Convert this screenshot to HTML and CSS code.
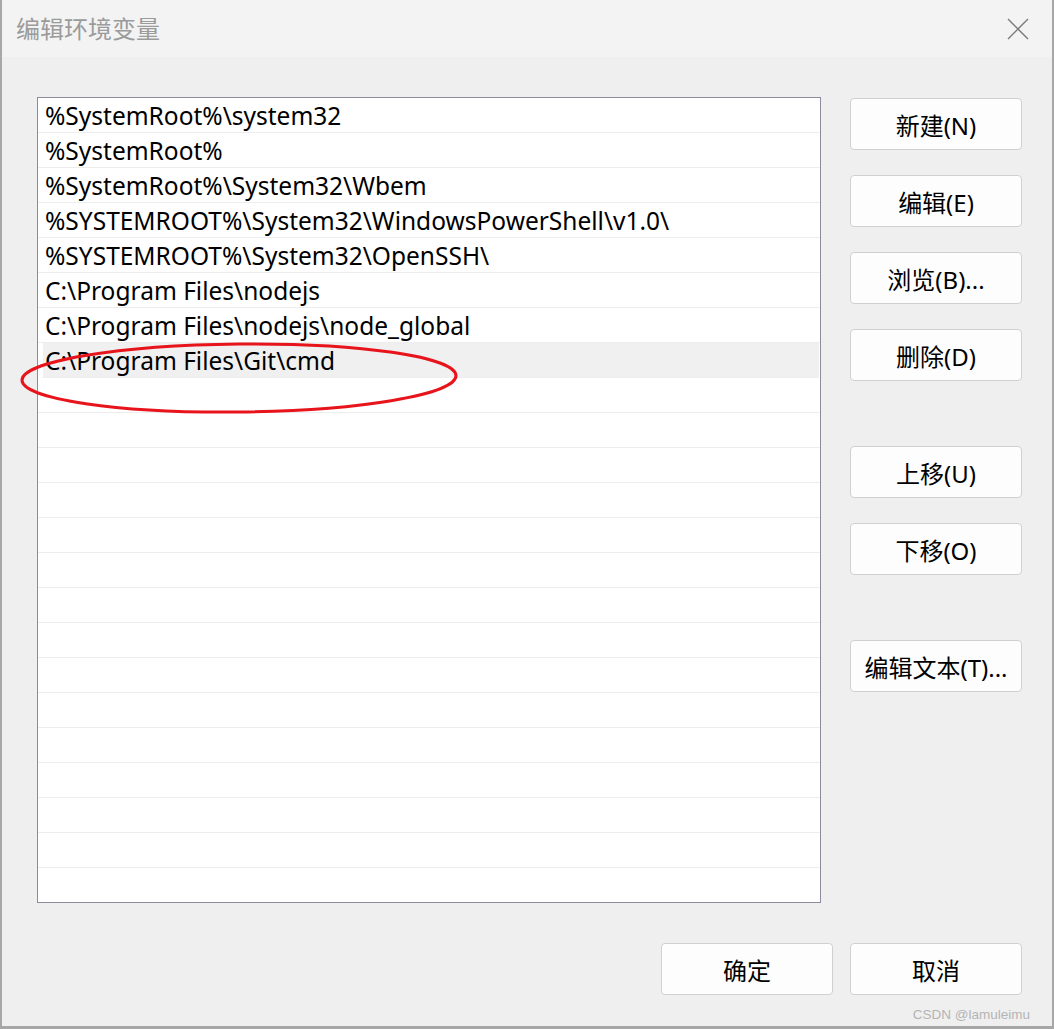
FILE: index.html
```html
<!DOCTYPE html>
<html lang="zh-CN">
<head>
    <meta charset="UTF-8">
    <meta name="viewport" content="width=device-width, initial-scale=1.0">
    <title>编辑环境变量</title>
    <link rel="stylesheet" href="styles.css">
</head>
<body>
    <div class="window">
        <div class="title-bar">
            <span class="title">编辑环境变量</span>
            <svg class="close-icon" width="22" height="22" viewBox="0 0 22 22" fill="none" stroke="#7a7a7a" stroke-width="1.4">
                <path d="M1 1 L21 21 M21 1 L1 21"></path>
            </svg>
        </div>

        <div class="content">
            <div class="path-list">
                <div class="row">%SystemRoot%\system32</div>
                <div class="row">%SystemRoot%</div>
                <div class="row">%SystemRoot%\System32\Wbem</div>
                <div class="row">%SYSTEMROOT%\System32\WindowsPowerShell\v1.0\</div>
                <div class="row">%SYSTEMROOT%\System32\OpenSSH\</div>
                <div class="row">C:\Program Files\nodejs</div>
                <div class="row">C:\Program Files\nodejs\node_global</div>
                <div class="row selected">C:\Program Files\Git\cmd</div>
                <div class="row"></div>
                <div class="row"></div>
                <div class="row"></div>
                <div class="row"></div>
                <div class="row"></div>
                <div class="row"></div>
                <div class="row"></div>
                <div class="row"></div>
                <div class="row"></div>
                <div class="row"></div>
                <div class="row"></div>
                <div class="row"></div>
                <div class="row"></div>
                <div class="row"></div>
                <div class="row last"></div>
            </div>

            <div class="side-buttons">
                <button class="btn">新建(N)</button>
                <button class="btn">编辑(E)</button>
                <button class="btn">浏览(B)...</button>
                <button class="btn">删除(D)</button>
                <button class="btn group-start">上移(U)</button>
                <button class="btn">下移(O)</button>
                <button class="btn group-start">编辑文本(T)...</button>
            </div>
        </div>

        <div class="footer">
            <button class="btn">确定</button>
            <button class="btn">取消</button>
        </div>

        <!-- red marker drawn over the screenshot -->
        <svg class="marker" width="460" height="90" viewBox="0 0 460 90">
            <ellipse cx="237" cy="45" rx="217" ry="34" fill="none" stroke="#e8141b" stroke-width="3" transform="rotate(-0.6 237 45)"></ellipse>
        </svg>

        <div class="watermark">CSDN @lamuleimu</div>
    </div>
</body>
</html>
```

FILE: styles.css
```css
/* Dialog window */
html, body {
    margin: 0;
    padding: 0;
}

body {
    background-color: #a7a7a7;
    font-family: "Noto Sans", "Noto Sans CJK SC", sans-serif;
    width: 1054px;
    height: 1029px;
    overflow: hidden;
}

.window {
    position: relative;
    margin: 0 2px 0 2px;
    height: 1026px;
    background-color: #efefef;
}

.title-bar {
    height: 57px;
    background-color: #f3f3f3;
    display: flex;
    align-items: flex-start;
    justify-content: space-between;
}

.title {
    margin: 12px 0 0 14px;
    font-family: "Noto Sans CJK SC", sans-serif;
    font-size: 24px;
    line-height: 32px;
    color: #9b9b9b;
}

.close-icon {
    margin: 18px 23px 0 0;
}

.content {
    display: flex;
    align-items: flex-start;
    padding: 40px 0 0 35px;
}

/* Path list box */
.path-list {
    width: 782px;
    height: 804px;
    border: 1px solid #8c8c9c;
    background-color: #ffffff;
    overflow: hidden;
}

.row {
    height: 34px;
    border-bottom: 1px solid #ededed;
    padding-left: 7px;
    font-size: 24.5px;
    line-height: 36px;
    color: #000;
    white-space: nowrap;
}

.row.selected {
    background-color: #f0f0f0;
    margin-left: 5px;
    padding-left: 2px;
    margin-right: 1px;
}

.row.last {
    border-bottom: none;
}

/* Buttons */
.side-buttons {
    display: flex;
    flex-direction: column;
    gap: 25px;
    margin-left: 29px;
    padding-top: 1px;
}

.side-buttons .group-start {
    margin-top: 40px;
}

.btn {
    width: 172px;
    height: 52px;
    background-color: #fdfdfd;
    border: 1px solid #d0d0d0;
    border-radius: 4px;
    font-family: "Noto Sans", "Noto Sans CJK SC", sans-serif;
    font-size: 24px;
    color: #000;
    padding: 0;
    cursor: pointer;
}

.footer {
    display: flex;
    justify-content: flex-end;
    gap: 17px;
    padding: 40px 30px 0 0;
}

/* Overlays */
.marker {
    position: absolute;
    left: 0;
    top: 333px;
}

.watermark {
    position: absolute;
    right: 22px;
    bottom: 4px;
    font-family: "Liberation Sans", sans-serif;
    font-size: 13.5px;
    color: #b4b4b4;
}
```
